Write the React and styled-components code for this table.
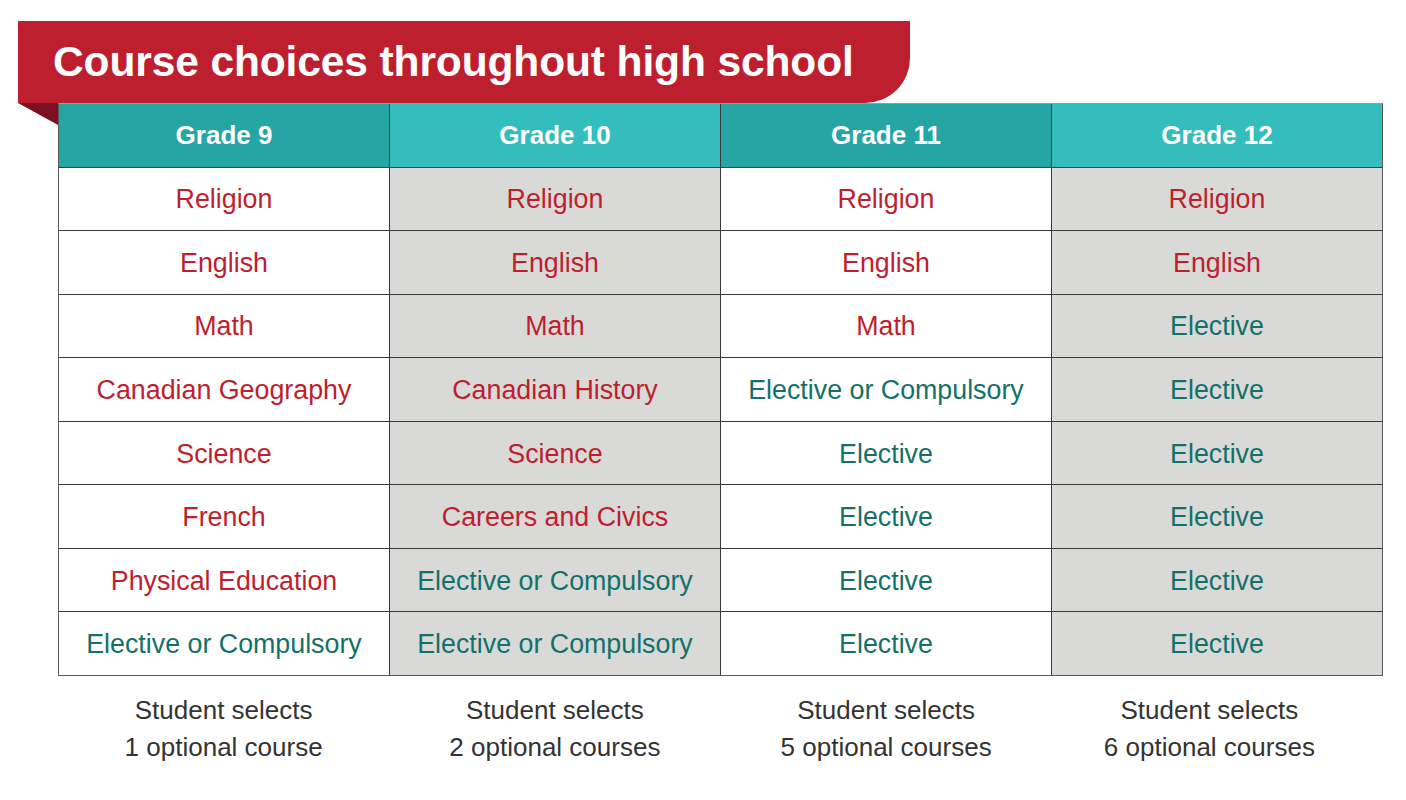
import React from 'react';
import styled, { createGlobalStyle } from "styled-components";

const GlobalStyle = createGlobalStyle`
body {
    margin: 0;
    background: #ffffff;
    font-family: "Liberation Sans", Arial, Helvetica, sans-serif;
}
`

const Page = styled.div`
width: 1406px;
height: 800px;
box-sizing: border-box;
padding: 21px 0 0 18px;
`

const Banner = styled.div`
position: relative;
width: 892px;
height: 82px;
box-sizing: border-box;
background: #be1f2f;
border-radius: 0 0 45px 0;
display: flex;
align-items: center;
padding: 0 0 0 35px;
&::after {
    content: "";
    position: absolute;
    left: 0;
    top: 100%;
    border-top: 22px solid #7c1020;
    border-left: 40px solid transparent;
}
`

const Title = styled.h1`
margin: 0;
color: #ffffff;
font-size: 42.5px;
font-weight: 700;
letter-spacing: -0.12px;
`

const Grid = styled.div`
margin-left: 40px;
width: 1325px;
height: 573px;
box-sizing: border-box;
display: grid;
grid-template-columns: repeat(4, 1fr);
grid-template-rows: repeat(9, 1fr);
gap: 1px;
background: #3a3a3a;
border: 1px solid #5a5a5a;
border-top-color: #9a9a9a;
`

const HeadCell = styled.div`
display: flex;
align-items: center;
justify-content: center;
background: ${p => p.dark ? '#25a6a5' : '#33bebd'};
color: #ffffff;
font-size: 26px;
font-weight: 700;
`

const Cell = styled.div`
display: flex;
align-items: center;
justify-content: center;
padding-top: 2px;
background: ${p => p.shaded ? '#d9d9d8' : '#ffffff'};
color: ${p => p.elective ? '#13716a' : '#be1e2d'};
font-size: 26.8px;
`

const Footer = styled.div`
margin-left: 40px;
width: 1325px;
display: grid;
grid-template-columns: repeat(4, 1fr);
padding-top: 16px;
`

const Note = styled.div`
text-align: center;
color: #333333;
font-size: 26px;
line-height: 37px;
padding-right: ${p => p.shift ? '16px' : '0'};
`

const columns = [
    {
        grade: 'Grade 9',
        count: '1 optional course',
        courses: ['Religion', 'English', 'Math', 'Canadian Geography', 'Science', 'French', 'Physical Education', 'Elective or Compulsory'],
    },
    {
        grade: 'Grade 10',
        count: '2 optional courses',
        courses: ['Religion', 'English', 'Math', 'Canadian History', 'Science', 'Careers and Civics', 'Elective or Compulsory', 'Elective or Compulsory'],
    },
    {
        grade: 'Grade 11',
        count: '5 optional courses',
        courses: ['Religion', 'English', 'Math', 'Elective or Compulsory', 'Elective', 'Elective', 'Elective', 'Elective'],
    },
    {
        grade: 'Grade 12',
        count: '6 optional courses',
        courses: ['Religion', 'English', 'Elective', 'Elective', 'Elective', 'Elective', 'Elective', 'Elective'],
    },
]

function App() {
    const rows = columns[0].courses.map((_, r) => columns.map(c => c.courses[r]))
    return (
        <Page>
            <GlobalStyle />
            <Banner>
                <Title>Course choices throughout high school</Title>
            </Banner>
            <Grid>
                {columns.map((c, i) => (
                    <HeadCell key={c.grade} dark={i % 2 === 0}>{c.grade}</HeadCell>
                ))}
                {rows.map((row, r) => row.map((name, i) => (
                    <Cell key={r + '-' + i} shaded={i % 2 === 1} elective={name.startsWith('Elective')}>
                        {name}
                    </Cell>
                )))}
            </Grid>
            <Footer>
                {columns.map((c, i) => (
                    <Note key={c.grade} shift={i === 3}>
                        Student selects<br />{c.count}
                    </Note>
                ))}
            </Footer>
        </Page>
    )
}

export default App;
